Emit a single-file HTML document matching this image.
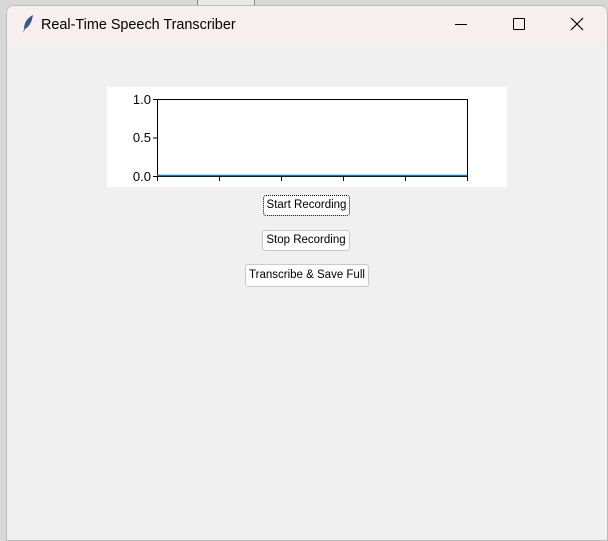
<!DOCTYPE html>
<html><head><meta charset="utf-8"><style>
body{margin:0;width:608px;height:541px;background:#d8d8d8;position:relative;overflow:hidden;font-family:"Liberation Sans",sans-serif}
.win{position:absolute;left:6px;top:5px;width:602px;height:536px;background:#f0f0f0;border:1px solid #bdbdbd;border-radius:8px 8px 0 0;box-sizing:border-box;overflow:hidden}
.tb{position:absolute;left:0;top:0;width:100%;height:38px;background:#f7eeee}
.title{position:absolute;left:34px;top:11px;font-size:14.4px;color:#000}
.btn{position:absolute;background:#fdfdfd;border:1px solid #c9c9c9;border-radius:3px;font-size:11.5px;text-align:center;box-sizing:border-box;line-height:19px;color:#000}
.lbl{position:absolute;font-size:13px;color:#000;right:0}
</style></head><body>
<div style="position:absolute;left:197px;top:0;width:56px;height:5px;border-left:1px solid #888;border-right:1px solid #888;background:#e8e8e8"></div>
<div class="win">
 <div class="tb">
  <svg style="position:absolute;left:14px;top:8px" width="14" height="20" viewBox="0 0 14 20"><path d="M12 1 C6 4 3 9 3 15 L2 19 L4 15 C8 13 11 8 12 1Z" fill="#3b5a8a"/></svg>
  <div class="title">Real-Time Speech Transcriber</div>
  <div style="position:absolute;left:448px;top:18px;width:12px;height:1px;background:#000"></div>
  <div style="position:absolute;left:506px;top:12px;width:10px;height:10px;border:1px solid #000;border-radius:1px"></div>
  <svg style="position:absolute;left:563px;top:11px" width="14" height="14"><path d="M1 1L13 13M13 1L1 13" stroke="#000" stroke-width="1.2"/></svg>
 </div>
 <div style="position:absolute;left:100px;top:81px;width:400px;height:100px;background:#fff">
  <div style="position:absolute;left:0;top:5px;width:44px;height:90px">
   <div class="lbl" style="top:0">1.0</div>
   <div class="lbl" style="top:38px">0.5</div>
   <div class="lbl" style="top:77px">0.0</div>
  </div>
  <svg style="position:absolute;left:0;top:0" width="400" height="100">
   <rect x="50.5" y="12.5" width="310" height="77" fill="none" stroke="#000" stroke-width="1"/>
   <line x1="50" y1="88.5" x2="360" y2="88.5" stroke="#1f77b4" stroke-width="1.5"/>
   <g stroke="#000"><line x1="46" y1="12.5" x2="50" y2="12.5"/><line x1="46" y1="51" x2="50" y2="51"/><line x1="46" y1="89.5" x2="50" y2="89.5"/>
   <line x1="50.5" y1="90" x2="50.5" y2="94"/><line x1="112.5" y1="90" x2="112.5" y2="94"/><line x1="174.5" y1="90" x2="174.5" y2="94"/><line x1="236.5" y1="90" x2="236.5" y2="94"/><line x1="298.5" y1="90" x2="298.5" y2="94"/><line x1="360.5" y1="90" x2="360.5" y2="94"/></g>
  </svg>
 </div>
 <div class="btn" style="left:256px;top:189px;width:87px;height:21px;border:1px dotted #000">Start Recording</div>
 <div class="btn" style="left:255px;top:224px;width:88px;height:21px">Stop Recording</div>
 <div class="btn" style="left:238px;top:258px;width:124px;height:23px;line-height:21px">Transcribe &amp; Save Full</div>
</div>
</body></html>
